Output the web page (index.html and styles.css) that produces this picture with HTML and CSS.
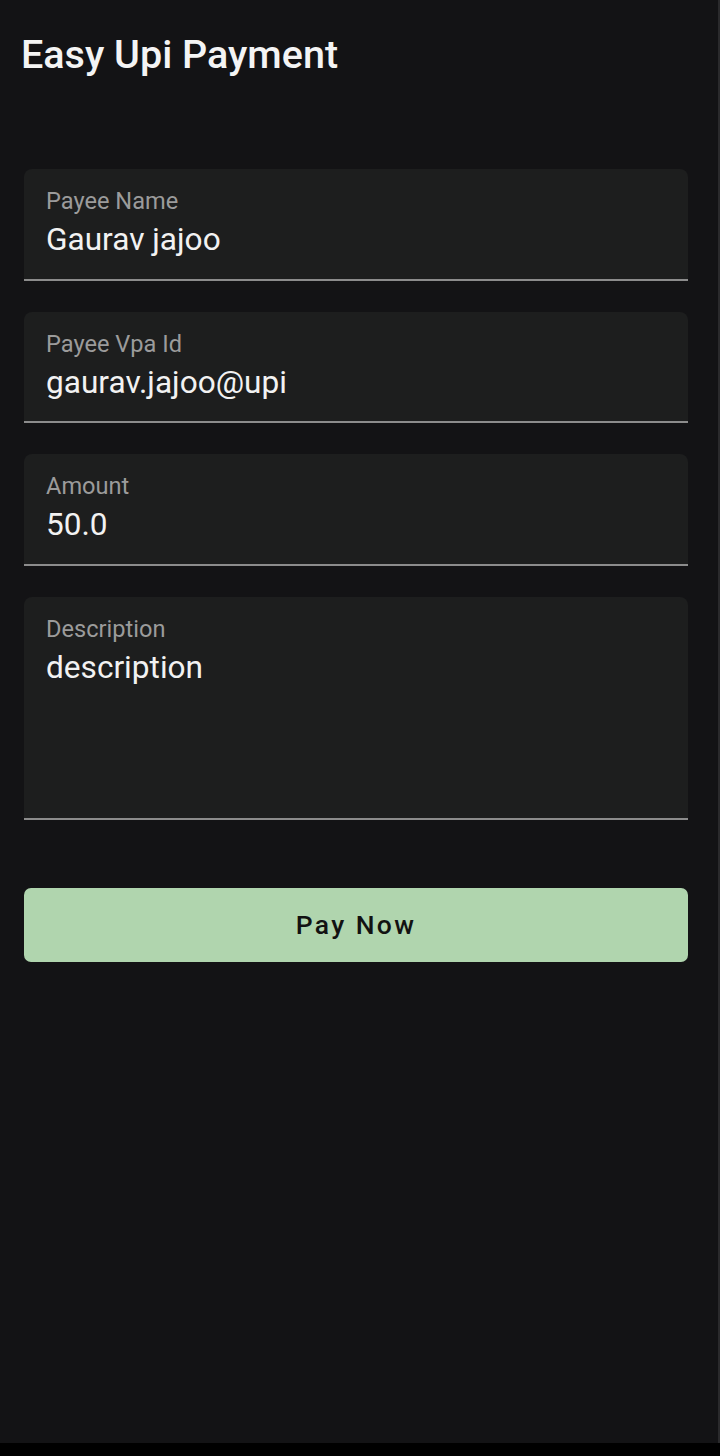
FILE: index.html
```html
<!DOCTYPE html>
<html>
<head>
<meta charset="utf-8">
<link rel="stylesheet" href="styles.css">
</head>
<body>
<div class="screen">
  <header class="appbar"><h1 class="title">Easy Upi Payment</h1></header>
  <main class="form">
    <div class="field">
      <div class="label">Payee Name</div>
      <div class="value">Gaurav jajoo</div>
    </div>
    <div class="field">
      <div class="label">Payee Vpa Id</div>
      <div class="value">gaurav.jajoo@upi</div>
    </div>
    <div class="field">
      <div class="label">Amount</div>
      <div class="value">50.0</div>
    </div>
    <div class="field field-multi">
      <div class="label">Description</div>
      <div class="value">description</div>
    </div>
    <button class="pay">Pay Now</button>
  </main>
</div>
<div class="navbar"></div>
</body>
</html>
```
FILE: styles.css
```css
html, body {
  margin: 0;
  padding: 0;
  background: #131315;
}
body {
  width: 720px;
  height: 1456px;
  display: flex;
  flex-direction: column;
  font-family: Roboto, "Noto Sans", sans-serif;
  overflow: hidden;
}
.screen {
  flex: 1;
  border-right: 2px solid #2a2a2c;
  display: flex;
  flex-direction: column;
}
.appbar {
  height: 110px;
  padding: 0 21px;
  display: flex;
  align-items: flex-start;
}
.title {
  margin: 31px 0 0;
  font-size: 39.5px;
  font-weight: 500;
  line-height: 48px;
  color: #f4f4f4;
}
.form {
  padding: 59px 30px 0 24px;
  display: flex;
  flex-direction: column;
  gap: 31px;
}
.field {
  background: #1d1e1e;
  border-radius: 8px 8px 0 0;
  border-bottom: 2px solid #8c8c8c;
  height: 90.5px;
  padding: 19px 22px 0;
}
.field-multi {
  height: 202px;
}
.label {
  font-size: 23.6px;
  line-height: 26px;
  color: #9b9b9b;
}
.value {
  margin-top: 7px;
  font-size: 31.6px;
  line-height: 38px;
  color: #f2f2f2;
}
.pay {
  margin-top: 37px;
  height: 74px;
  border: none;
  border-radius: 7px;
  background: #b0d5ae;
  color: #121212;
  font-family: Roboto, sans-serif;
  font-size: 26.5px;
  font-weight: 500;
  letter-spacing: 2.4px;
}
.navbar {
  height: 13px;
  background: #000;
}
```
